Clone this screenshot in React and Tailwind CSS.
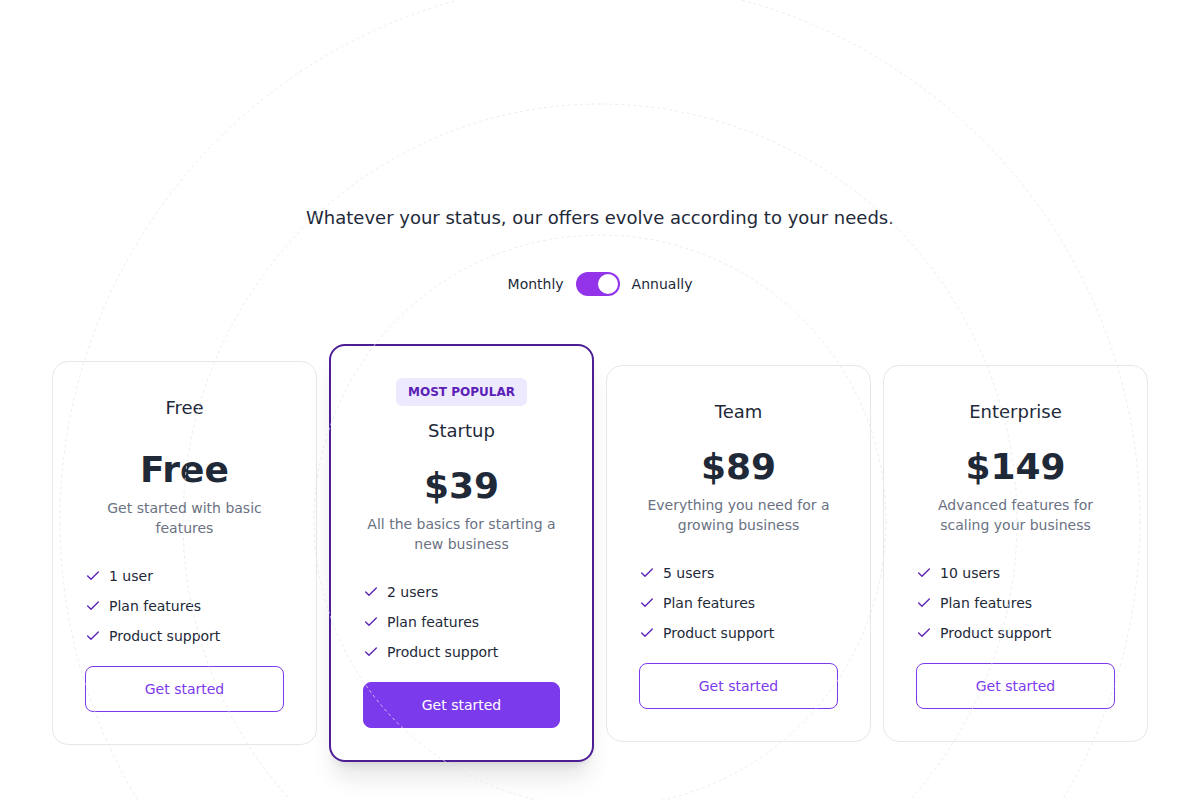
import React from "react";
import { Check } from "lucide-react";

const plans = [
  {
    name: "Free",
    price: "Free",
    desc: "Get started with basic features",
    features: ["1 user", "Plan features", "Product support"],
  },
  {
    name: "Startup",
    price: "$39",
    desc: "All the basics for starting a new business",
    features: ["2 users", "Plan features", "Product support"],
    popular: true,
  },
  {
    name: "Team",
    price: "$89",
    desc: "Everything you need for a growing business",
    features: ["5 users", "Plan features", "Product support"],
  },
  {
    name: "Enterprise",
    price: "$149",
    desc: "Advanced features for scaling your business",
    features: ["10 users", "Plan features", "Product support"],
  },
];

// decorative dashed rings, drawn over the page
function Circles() {
  return (
    <svg
      className="absolute inset-0 pointer-events-none"
      width="1200"
      height="800"
      viewBox="0 0 1200 800"
      fill="none"
    >
      {[286, 417, 540].map((r) => (
        <circle
          key={r}
          cx="600"
          cy="521"
          r={r}
          stroke="#e5e7eb"
          strokeOpacity="0.8"
          strokeWidth="1"
          strokeDasharray="3 3"
        />
      ))}
    </svg>
  );
}

function Card({ plan, first }) {
  const popular = plan.popular;
  return (
    <div
      className={
        popular
          ? "bg-white rounded-2xl border-2 border-[#4c1d95] p-8 flex flex-col items-center text-center shadow-xl"
          : "bg-white rounded-2xl border border-gray-200 p-8 flex flex-col items-center text-center"
      }
    >
      {popular && (
        <span className="mb-[11px] rounded-md bg-[#ede9fe] px-3 py-1.5 text-xs leading-4 font-bold text-[#5b21b6]">
          MOST POPULAR
        </span>
      )}
      <h3 className="text-lg leading-7 text-gray-800">{plan.name}</h3>
      <div
        className={
          (first ? "mt-[28px]" : "mt-[21px]") +
          " text-4xl leading-10 font-bold text-[#1f2937]"
        }
      >
        {plan.price}
      </div>
      <p className="mt-2 text-sm leading-5 text-gray-500">{plan.desc}</p>
      <ul className="mt-7 w-full flex flex-col gap-2.5">
        {plan.features.map((f) => (
          <li key={f} className="flex items-center gap-2 text-sm leading-5 text-gray-800">
            <Check className="w-4 h-4 text-[#5b21b6]" strokeWidth={2} />
            {f}
          </li>
        ))}
      </ul>
      {popular ? (
        <button className="mt-5 w-full rounded-lg bg-[#7c3aed] py-3 text-sm leading-5 text-white border border-[#7c3aed]">
          Get started
        </button>
      ) : (
        <button className="mt-5 w-full rounded-lg border border-[#7c3aed] py-3 text-sm leading-5 text-[#7c3aed]">
          Get started
        </button>
      )}
    </div>
  );
}

export default function App() {
  return (
    <div
      className="relative w-full h-[800px] overflow-hidden bg-white"
      style={{ fontFamily: '"DejaVu Sans", "Noto Sans", sans-serif' }}
    >
      <div className="relative flex flex-col items-center pt-[204px]">
        <p className="text-lg leading-7 text-gray-800">
          Whatever your status, our offers evolve according to your needs.
        </p>
        <div className="mt-[40px] flex items-center gap-3 text-sm text-gray-800">
          <span>Monthly</span>
          <div className="w-11 h-6 rounded-full bg-[#9333ea] p-0.5 flex justify-end">
            <div className="w-5 h-5 rounded-full bg-white" />
          </div>
          <span>Annually</span>
        </div>
        <div className="mt-12 w-[1096px] grid grid-cols-4 gap-3 items-center">
          {plans.map((p, i) => (
            <Card key={p.name} plan={p} first={i === 0} />
          ))}
        </div>
      </div>
      <Circles />
    </div>
  );
}
